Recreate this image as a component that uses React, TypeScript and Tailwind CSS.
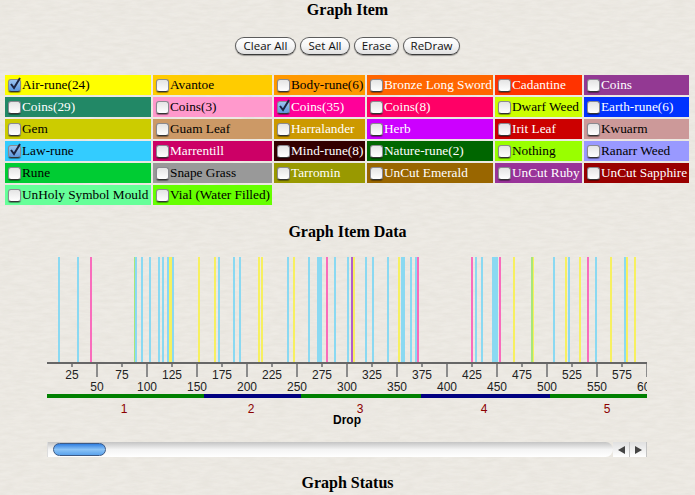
const items: [string, string, boolean, boolean][] = [
  ["Air-rune(24)", "bg-[#ffff00]", false, true],
  ["Avantoe", "bg-[#ffcc00]", false, false],
  ["Body-rune(6)", "bg-[#ff9900]", false, false],
  ["Bronze Long Sword", "bg-[#ff6600]", true, false],
  ["Cadantine", "bg-[#ff3300]", true, false],
  ["Coins", "bg-[#933993]", true, false],
  ["Coins(29)", "bg-[#228866]", true, false],
  ["Coins(3)", "bg-[#ff99cc]", false, false],
  ["Coins(35)", "bg-[#ff0099]", true, true],
  ["Coins(8)", "bg-[#ff0066]", true, false],
  ["Dwarf Weed", "bg-[#ccff00]", false, false],
  ["Earth-rune(6)", "bg-[#0033ff]", true, false],
  ["Gem", "bg-[#cccc00]", false, false],
  ["Guam Leaf", "bg-[#cc9966]", false, false],
  ["Harralander", "bg-[#cc9900]", true, false],
  ["Herb", "bg-[#cc00ff]", true, false],
  ["Irit Leaf", "bg-[#cc0000]", true, false],
  ["Kwuarm", "bg-[#cc9999]", false, false],
  ["Law-rune", "bg-[#33ccff]", false, true],
  ["Marrentill", "bg-[#cc0066]", true, false],
  ["Mind-rune(8)", "bg-[#330000]", true, false],
  ["Nature-rune(2)", "bg-[#006600]", true, false],
  ["Nothing", "bg-[#99ff00]", false, false],
  ["Ranarr Weed", "bg-[#9999ff]", false, false],
  ["Rune", "bg-[#00cc33]", false, false],
  ["Snape Grass", "bg-[#999999]", false, false],
  ["Tarromin", "bg-[#999900]", true, false],
  ["UnCut Emerald", "bg-[#996600]", true, false],
  ["UnCut Ruby", "bg-[#993399]", true, false],
  ["UnCut Sapphire", "bg-[#990000]", true, false],
  ["UnHoly Symbol Mould", "bg-[#66ff99]", false, false],
  ["Vial (Water Filled)", "bg-[#66ff00]", false, false],
];

const BLUE = "#8ad9f2";
const YELLOW = "#f7f060";
const PINK = "#f96cbc";
const GREEN = "#a8e67a";

// x, width, colour of every drop line
const bars: [number, number, string][] = [
  [58, 2, BLUE], [77, 2, BLUE], [90, 2, PINK], [134, 1, GREEN], [135, 2, BLUE], [141, 2, BLUE],
  [149, 2, BLUE], [158, 2, BLUE], [162, 2, BLUE], [167, 2, BLUE], [169, 3, YELLOW], [172, 2, BLUE],
  [198, 2, YELLOW], [214, 2, YELLOW], [218, 2, BLUE], [233, 2, BLUE], [239, 2, BLUE], [258, 2, YELLOW],
  [261, 2, YELLOW], [287, 2, BLUE], [293, 2, YELLOW], [308, 2, BLUE], [317, 2, BLUE], [319, 3, BLUE],
  [326, 2, PINK], [334, 2, BLUE], [347, 2, BLUE], [351, 2, "#b060c8"], [353, 2, YELLOW], [365, 2, BLUE],
  [372, 2, BLUE], [387, 2, BLUE], [398, 2, YELLOW], [401, 4, BLUE], [410, 2, BLUE], [415, 2, BLUE],
  [417, 2, PINK], [471, 2, PINK], [475, 2, BLUE], [481, 2, BLUE], [492, 6, BLUE], [499, 2, PINK],
  [513, 2, YELLOW], [531, 2, GREEN], [533, 1, YELLOW], [553, 2, BLUE], [565, 2, YELLOW], [568, 2, BLUE],
  [579, 2, YELLOW], [587, 2, PINK], [595, 2, BLUE], [610, 2, YELLOW], [624, 2, BLUE], [626, 2, YELLOW],
  [634, 2, YELLOW],
];

const bands: [number, number, string][] = [
  [47, 157, "#008000"], [204, 97, "#000080"], [301, 120, "#008000"], [421, 129, "#000080"], [550, 97, "#008000"],
];

const sessions: [number, string][] = [[124, "1"], [251, "2"], [360, "3"], [484, "4"], [607, "5"]];

function Check({ on }: { on: boolean }) {
  return (
    <span
      className={
        "relative mr-[1px] block h-[13px] w-[13px] shrink-0 rounded-[3px] border border-[#8a8a90] border-b-[#333] shadow-[0_1px_1px_rgba(0,0,0,0.4)] " +
        (on ? "bg-gradient-to-b from-[#9cc4ee] to-[#5d97dc]" : "bg-gradient-to-b from-[#e4e4e4] to-white")
      }
    >
      {on && (
        <svg viewBox="0 0 14 14" className="absolute -left-px -top-[3px] h-[14px] w-[14px]">
          <path d="M3 7l3 4 6-10" fill="none" stroke="#1c2440" strokeWidth="2" />
        </svg>
      )}
    </span>
  );
}

function AquaButton({ label, width }: { label: string; width: string }) {
  return (
    <button
      className={
        "flex h-[18px] items-center justify-center rounded-full border border-[#5c5c5c] border-b-[#3a3a3a] bg-gradient-to-b from-white via-[#f6f6f6] to-[#e0e0e0] font-['Open_Sans',sans-serif] text-[11.5px] text-[#111] shadow-[0_1px_1px_rgba(0,0,0,0.35)] " +
        width
      }
    >
      {label}
    </button>
  );
}

function Chart() {
  const ticks = Array.from({ length: 24 }, (_, i) => (i + 1) * 25);
  return (
    <svg width="695" height="172" viewBox="0 255 695 172" className="block font-['Liberation_Sans',sans-serif]">
      <clipPath id="axis-clip">
        <rect x={47} y={255} width={600} height={172} />
      </clipPath>
      {bars.map(([x, w, c], i) => (
        <rect key={i} x={x} y={257} width={w} height={105} fill={c} />
      ))}
      <rect x={47} y={362} width={600} height={2} fill="#666" />
      <g clipPath="url(#axis-clip)">
        {ticks.map((t) => {
          const major = t % 50 === 0;
          return (
            <g key={t}>
              <rect x={46 + t} y={364} width={2} height={major ? 13 : 3} fill="#8c8c8c" />
              <text x={47 + t} y={major ? 391 : 379} textAnchor="middle" fontSize="12" fill="#222">
                {t}
              </text>
            </g>
          );
        })}
      </g>
      {bands.map(([x, w, c]) => (
        <rect key={x} x={x} y={394} width={w} height={4} fill={c} />
      ))}
      {sessions.map(([x, n]) => (
        <text key={n} x={x} y={413} textAnchor="middle" fontSize="12" fill="#8b0000">
          {n}
        </text>
      ))}
      <text x={347} y={424} textAnchor="middle" fontSize="12" fontWeight="bold" fill="#000">
        Drop
      </text>
    </svg>
  );
}

function Scrollbar() {
  return (
    <div className="ml-[47px] flex h-[15px] w-[600px] items-stretch">
      <div className="flex flex-1 items-center rounded-r-full border-l border-[#ddd] bg-gradient-to-b from-[#c4c4c4] via-[#f4f4f4] to-white pl-[5px]">
        <div className="h-[13px] w-[53px] rounded-full border border-[#3d5a85] bg-gradient-to-b from-[#2f7fe0] via-[#8cc4f6] to-[#5aa2ec]" />
      </div>
      <div className="flex w-[17px] items-center justify-center border-r border-[#c4c4c4] bg-gradient-to-b from-[#e0e0e0] to-white">
        <svg width="7" height="8" viewBox="0 0 7 8">
          <path d="M7 0v8L0 4z" fill="#444" />
        </svg>
      </div>
      <div className="flex w-[17px] items-center justify-center border-r border-[#c4c4c4] bg-gradient-to-b from-[#e0e0e0] to-white">
        <svg width="7" height="8" viewBox="0 0 7 8">
          <path d="M0 0v8l7-4z" fill="#444" />
        </svg>
      </div>
    </div>
  );
}

export default function App() {
  return (
    <div className="h-[495px] w-[695px] overflow-hidden bg-[#eeebe5] bg-[url('data:image/svg+xml,%3Csvg%20xmlns=%22http://www.w3.org/2000/svg%22%20width=%22400%22%20height=%22400%22%3E%3Cfilter%20id=%22n%22%3E%3CfeTurbulence%20type=%22fractalNoise%22%20baseFrequency=%22.07%20.3%22%20numOctaves=%223%22/%3E%3CfeColorMatrix%20values=%220%200%200%200%20.55%200%200%200%200%20.52%200%200%200%200%20.45%20.25%200%200%200%20-.06%22/%3E%3C/filter%3E%3Crect%20width=%22400%22%20height=%22400%22%20filter=%22url(%23n)%22/%3E%3C/svg%3E')] font-['Liberation_Serif',serif] text-black">
      <h2 className="h-[19px] text-center text-[16px] font-bold leading-[19px]">Graph Item</h2>

      <div className="mt-[18px] flex justify-center gap-1">
        <AquaButton label="Clear All" width="w-[61px]" />
        <AquaButton label="Set All" width="w-[50px]" />
        <AquaButton label="Erase" width="w-[45px]" />
        <AquaButton label="ReDraw" width="w-[57px]" />
      </div>

      {/* Item checkboxes */}
      <div className="ml-[5px] mt-5 grid grid-cols-[146px_119px_91px_126px_87px_105px] gap-[2px]">
        {items.map(([name, bg, light, on]) => (
          <label
            key={name}
            className={
              "flex h-5 items-center overflow-hidden whitespace-nowrap pl-[3px] text-[13.3px] leading-5 " +
              bg +
              (light ? " text-white" : " text-black")
            }
          >
            <Check on={on} />
            {name}
          </label>
        ))}
      </div>

      <h2 className="mt-[17px] h-[19px] text-center text-[16px] font-bold leading-[19px]">Graph Item Data</h2>

      <div className="mt-[14px]">
        <Chart />
      </div>

      <div className="mt-[15px]">
        <Scrollbar />
      </div>

      <h2 className="mt-4 h-[19px] text-center text-[16px] font-bold leading-[19px]">Graph Status</h2>
    </div>
  );
}
